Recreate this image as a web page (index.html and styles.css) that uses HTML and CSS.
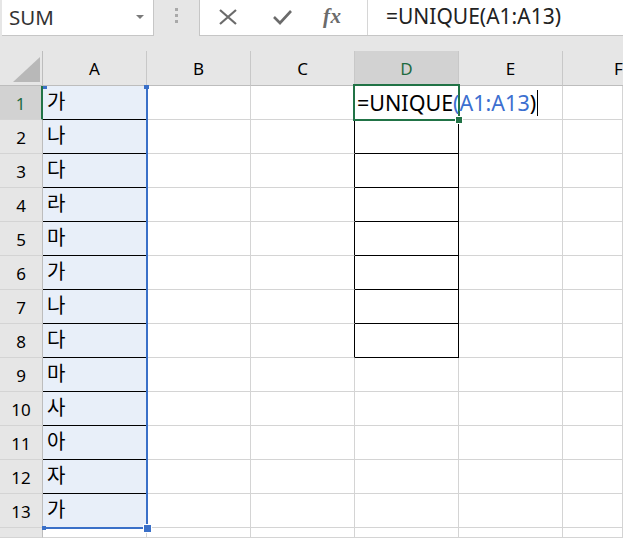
FILE: index.html
```html
<!DOCTYPE html>
<html>
<head>
<meta charset="utf-8">
<link rel="stylesheet" href="styles.css">
</head>
<body>
<div class="app">
  <div class="toolbar">
    <div class="namebox"><span class="nb-text">SUM</span><span class="nb-arrow"></span></div>
    <div class="sep"><span></span><span></span><span></span></div>
    <div class="fbar">
      <div class="fbtns">
        <svg class="ico" width="20" height="16" viewBox="0 0 20 16"><path d="M2 1 L18 15 M18 1 L2 15" stroke="#6b6b6b" stroke-width="2.2" fill="none"/></svg>
        <svg class="ico" width="20" height="16" viewBox="0 0 20 16"><path d="M2 8 L8 14 L19 2" stroke="#6b6b6b" stroke-width="2.6" fill="none"/></svg>
        <span class="fx">fx</span>
      </div>
      <div class="ftext">=UNIQUE(A1:A13)</div>
    </div>
  </div>
  <div class="sheet">
    <div class="row hdr">
      <div class="corner"><svg width="42" height="34" viewBox="0 0 42 34"><polygon points="13,31 40,31 40,6" fill="#b8b8b8"/></svg></div>
      <div class="ch">A</div><div class="ch">B</div><div class="ch">C</div><div class="ch sel">D</div><div class="ch">E</div><div class="ch last">F</div>
    </div>
    <div class="row"><div class="rh sel">1</div><div class="c a">가</div><div class="c"></div><div class="c"></div><div class="c d1"></div><div class="c"></div><div class="c"></div></div>
    <div class="row"><div class="rh">2</div><div class="c a">나</div><div class="c"></div><div class="c bl"></div><div class="c bx"></div><div class="c"></div><div class="c"></div></div>
    <div class="row"><div class="rh">3</div><div class="c a">다</div><div class="c"></div><div class="c bl"></div><div class="c bx"></div><div class="c"></div><div class="c"></div></div>
    <div class="row"><div class="rh">4</div><div class="c a">라</div><div class="c"></div><div class="c bl"></div><div class="c bx"></div><div class="c"></div><div class="c"></div></div>
    <div class="row"><div class="rh">5</div><div class="c a">마</div><div class="c"></div><div class="c bl"></div><div class="c bx"></div><div class="c"></div><div class="c"></div></div>
    <div class="row"><div class="rh">6</div><div class="c a">가</div><div class="c"></div><div class="c bl"></div><div class="c bx"></div><div class="c"></div><div class="c"></div></div>
    <div class="row"><div class="rh">7</div><div class="c a">나</div><div class="c"></div><div class="c bl"></div><div class="c bx"></div><div class="c"></div><div class="c"></div></div>
    <div class="row"><div class="rh">8</div><div class="c a">다</div><div class="c"></div><div class="c bl"></div><div class="c bx"></div><div class="c"></div><div class="c"></div></div>
    <div class="row"><div class="rh">9</div><div class="c a">마</div><div class="c"></div><div class="c"></div><div class="c"></div><div class="c"></div><div class="c"></div></div>
    <div class="row"><div class="rh">10</div><div class="c a">사</div><div class="c"></div><div class="c"></div><div class="c"></div><div class="c"></div><div class="c"></div></div>
    <div class="row"><div class="rh">11</div><div class="c a">아</div><div class="c"></div><div class="c"></div><div class="c"></div><div class="c"></div><div class="c"></div></div>
    <div class="row"><div class="rh">12</div><div class="c a">자</div><div class="c"></div><div class="c"></div><div class="c"></div><div class="c"></div><div class="c"></div></div>
    <div class="row"><div class="rh">13</div><div class="c a alast">가</div><div class="c"></div><div class="c"></div><div class="c"></div><div class="c"></div><div class="c"></div></div>
    <div class="row tail"><div class="rh"></div><div class="c"></div><div class="c"></div><div class="c"></div><div class="c"></div><div class="c"></div><div class="c"></div></div>

    <div class="range">
      <span class="h-tl"></span><span class="h-tr"></span><span class="h-bl"></span><span class="h-br"></span>
    </div>
    <div class="active">
      <div class="formula">=UNIQUE<span class="ref">(A1:A13</span>)<span class="caret"></span></div>
      <span class="handle"></span>
    </div>
  </div>
</div>
</body>
</html>
```
FILE: styles.css
```css
* { box-sizing: border-box; }
html, body { margin: 0; padding: 0; }
body {
  width: 623px; height: 538px; overflow: hidden;
  background: #e6e6e6;
  font-family: "Noto Sans", "Noto Sans CJK KR", sans-serif;
  color: #000;
}
.app { width: 623px; height: 538px; overflow: hidden; }

.toolbar {
  display: flex;
  height: 36px;
  margin-bottom: 15px;
}
.namebox {
  margin-left: 2px;
  width: 152px;
  height: 36px;
  background: #fff;
  border-right: 1px solid #c6c6c6;
  border-bottom: 1px solid #c6c6c6;
  display: flex; align-items: center; justify-content: space-between;
  padding: 0 9px 2px 7px;
}
.nb-text { font-size: 20.5px; color: #333; }
.nb-arrow {
  width: 0; height: 0;
  border-left: 4px solid transparent; border-right: 4px solid transparent;
  border-top: 4px solid #7a7a7a;
}
.sep {
  width: 45px;
  display: flex; flex-direction: column; align-items: center; justify-content: center; gap: 3px;
  padding-bottom: 6px;
}
.sep span { width: 3px; height: 3px; background: #a9a9a9; display: block; }
.fbar {
  flex: 1;
  display: flex;
  background: #fff;
  border-left: 1px solid #c6c6c6;
  border-bottom: 1px solid #c6c6c6;
  height: 36px;
}
.fbtns {
  width: 168px;
  border-right: 1px solid #d6d6d6;
  display: flex; align-items: center;
  padding: 0 0 2px 18px;
  gap: 34px;
}
.ico { display: block; }
.fx {
  font-family: "Liberation Serif", serif;
  font-style: italic;
  font-weight: bold;
  font-size: 21px;
  color: #6b6b6b;
  margin-left: -3px;
  letter-spacing: 0.5px;
}
.ftext {
  padding-left: 18px;
  font-size: 21px;
  line-height: 33px;
  color: #222;
  white-space: nowrap;
}

.sheet { position: relative; background: #fff; }
.row {
  display: grid;
  grid-template-columns: 43px 104px 104px 104px 104px 104px 60px;
  height: 34px;
}
.row.hdr { height: 35px; background: #e6e6e6; }
.row.tail { height: 10px; }
.corner {
  border-right: 1px solid #bdbdbd;
  border-bottom: 1px solid #bdbdbd;
}
.corner svg { display: block; }
.ch {
  border-right: 1px solid #c8c8c8;
  border-bottom: 1px solid #bdbdbd;
  display: flex; align-items: center; justify-content: center;
  font-size: 17px;
  padding-top: 1px;
}
.ch.last { border-right: none; justify-content: flex-start; padding-left: 51px; }
.ch.sel {
  background: #d2d2d2;
  border-bottom: 2px solid #217346;
  color: #1e6b40;
}
.rh {
  background: #e6e6e6;
  border-right: 1px solid #bdbdbd;
  border-bottom: 1px solid #d4d4d4;
  display: flex; align-items: center; justify-content: center;
  font-size: 17px;
  padding-top: 1px;
}
.rh.sel {
  background: #d2d2d2;
  border-right: 2px solid #217346;
  color: #1e6b40;
}
.c {
  border-right: 1px solid #d4d4d4;
  border-bottom: 1px solid #d4d4d4;
}
.c.a {
  background: #e8eff9;
  border-bottom-color: #000;
  font-size: 20px;
  padding-left: 4px;
  line-height: 32px;
}
.c.a.alast { border-bottom-color: #d4d4d4; }
.c.bl { border-right-color: #000; }
.c.bx { border-right-color: #000; border-bottom-color: #000; }
.c.d1 { border-bottom-color: #000; }

.range {
  position: absolute;
  left: 43px; top: 35px;
  width: 105px; height: 443px;
  border-right: 2px solid #3a70c8;
  border-bottom: 2px solid #3a70c8;
  pointer-events: none;
}
.range span { position: absolute; background: #3a70c8; display: block; }
.h-tl { left: 0; top: 0; width: 4px; height: 3px; }
.h-tr { right: -3px; top: -1px; width: 5px; height: 4px; }
.h-bl { left: -1px; bottom: -3px; width: 4px; height: 4px; }
.h-br { right: -5px; bottom: -5px; width: 7px; height: 7px; outline: 1px solid #fff; }

.active {
  position: absolute;
  left: 353px; top: 33px;
  width: 107px; height: 37px;
  border: 2px solid #217346;
}
.formula {
  position: absolute;
  left: 2px; top: 0;
  height: 33px;
  font-size: 21.5px;
  line-height: 33px;
  white-space: nowrap;
  display: flex; align-items: center;
}
.ref { color: #3c6fd0; }
.caret {
  display: inline-block;
  width: 1px; height: 26px;
  background: #000;
  margin-left: 1px;
}
.handle {
  position: absolute;
  right: -4px; bottom: -4px;
  width: 6px; height: 6px;
  background: #217346;
  outline: 1px solid #fff;
}
```
